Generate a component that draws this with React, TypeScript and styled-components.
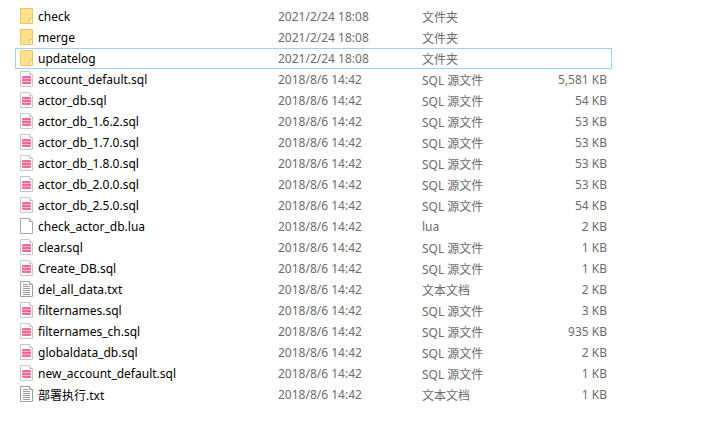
import * as React from "react";
import styled, { createGlobalStyle } from "styled-components";

const Global = createGlobalStyle`
  html, body {
    margin: 0;
    padding: 0;
    background: #fff;
  }
`;

const List = styled.div`
  width: 597px;
  margin-left: 15px;
  padding-top: 6px;
  font-family: "Noto Sans", "Noto Sans CJK SC", sans-serif;
  font-size: 12px;
`;

const Row = styled.div<{ $focused?: boolean }>`
  display: grid;
  grid-template-columns: 22px 240px 144px 80px 105px;
  align-items: center;
  height: 21px;
  box-sizing: border-box;
  border: 1px solid ${(p) => (p.$focused ? "#99d1ff" : "transparent")};
  white-space: nowrap;
`;

const IconCell = styled.div`
  display: flex;
  align-self: start;
  padding: 1px 0 0 4px;
`;

const Name = styled.div`
  color: #000;
`;

const Meta = styled.div`
  color: #6d6d6d;
`;

const Size = styled(Meta)`
  text-align: right;
`;

const FolderIcon = () => (
  <svg width="14" height="16" viewBox="0 0 14 16">
    <path d="M0.5 0.5H12.5V15.5H0.5Z" fill="#ffe08c" stroke="#e9c863" />
    <path d="M9.5 15.5V10.5H12.5V15.5Z" fill="#fff3c4" stroke="#e9c863" />
  </svg>
);

const PageOutline = ({ stroke }: { stroke: string }) => (
  <>
    <path d="M0.5 0.5H9.5L12.5 3.5V15.5H0.5Z" fill="#fff" stroke={stroke} />
    <path d="M9.5 0.5V3.5H12.5" fill="#eee" stroke={stroke} />
  </>
);

const SqlIcon = () => (
  <svg width="14" height="16" viewBox="0 0 14 16">
    <PageOutline stroke="#c8c8c8" />
    <rect x="2" y="5" width="9" height="8" rx="1" fill="#f7679c" />
    <path d="M2 7.5H11M2 10.5H11" stroke="#fdb6d0" />
  </svg>
);

const LuaIcon = () => (
  <svg width="14" height="16" viewBox="0 0 14 16">
    <PageOutline stroke="#a8a8a8" />
  </svg>
);

const TxtIcon = () => (
  <svg width="14" height="16" viewBox="0 0 14 16">
    <PageOutline stroke="#a0a0a0" />
    <path d="M3 3.5H8M3 5.5H10M3 7.5H10M3 9.5H10M3 11.5H10M3 13.5H10" stroke="#9a9a9a" />
  </svg>
);

type Kind = "folder" | "sql" | "lua" | "txt";

const icons: Record<Kind, React.FC> = {
  folder: FolderIcon,
  sql: SqlIcon,
  lua: LuaIcon,
  txt: TxtIcon,
};

const typeLabels: Record<Kind, string> = {
  folder: "文件夹",
  sql: "SQL 源文件",
  lua: "lua",
  txt: "文本文档",
};

const files: { name: string; kind: Kind; date: string; size?: string; focused?: boolean }[] = [
  { name: "check", kind: "folder", date: "2021/2/24 18:08" },
  { name: "merge", kind: "folder", date: "2021/2/24 18:08" },
  { name: "updatelog", kind: "folder", date: "2021/2/24 18:08", focused: true },
  { name: "account_default.sql", kind: "sql", date: "2018/8/6 14:42", size: "5,581 KB" },
  { name: "actor_db.sql", kind: "sql", date: "2018/8/6 14:42", size: "54 KB" },
  { name: "actor_db_1.6.2.sql", kind: "sql", date: "2018/8/6 14:42", size: "53 KB" },
  { name: "actor_db_1.7.0.sql", kind: "sql", date: "2018/8/6 14:42", size: "53 KB" },
  { name: "actor_db_1.8.0.sql", kind: "sql", date: "2018/8/6 14:42", size: "53 KB" },
  { name: "actor_db_2.0.0.sql", kind: "sql", date: "2018/8/6 14:42", size: "53 KB" },
  { name: "actor_db_2.5.0.sql", kind: "sql", date: "2018/8/6 14:42", size: "54 KB" },
  { name: "check_actor_db.lua", kind: "lua", date: "2018/8/6 14:42", size: "2 KB" },
  { name: "clear.sql", kind: "sql", date: "2018/8/6 14:42", size: "1 KB" },
  { name: "Create_DB.sql", kind: "sql", date: "2018/8/6 14:42", size: "1 KB" },
  { name: "del_all_data.txt", kind: "txt", date: "2018/8/6 14:42", size: "2 KB" },
  { name: "filternames.sql", kind: "sql", date: "2018/8/6 14:42", size: "3 KB" },
  { name: "filternames_ch.sql", kind: "sql", date: "2018/8/6 14:42", size: "935 KB" },
  { name: "globaldata_db.sql", kind: "sql", date: "2018/8/6 14:42", size: "2 KB" },
  { name: "new_account_default.sql", kind: "sql", date: "2018/8/6 14:42", size: "1 KB" },
  { name: "部署执行.txt", kind: "txt", date: "2018/8/6 14:42", size: "1 KB" },
];

export default function App() {
  return (
    <>
      <Global />
      <List>
        {files.map((f) => {
          const Icon = icons[f.kind];
          return (
            <Row key={f.name} $focused={f.focused}>
              <IconCell>
                <Icon />
              </IconCell>
              <Name>{f.name}</Name>
              <Meta>{f.date}</Meta>
              <Meta>{typeLabels[f.kind]}</Meta>
              <Size>{f.size}</Size>
            </Row>
          );
        })}
      </List>
    </>
  );
}
